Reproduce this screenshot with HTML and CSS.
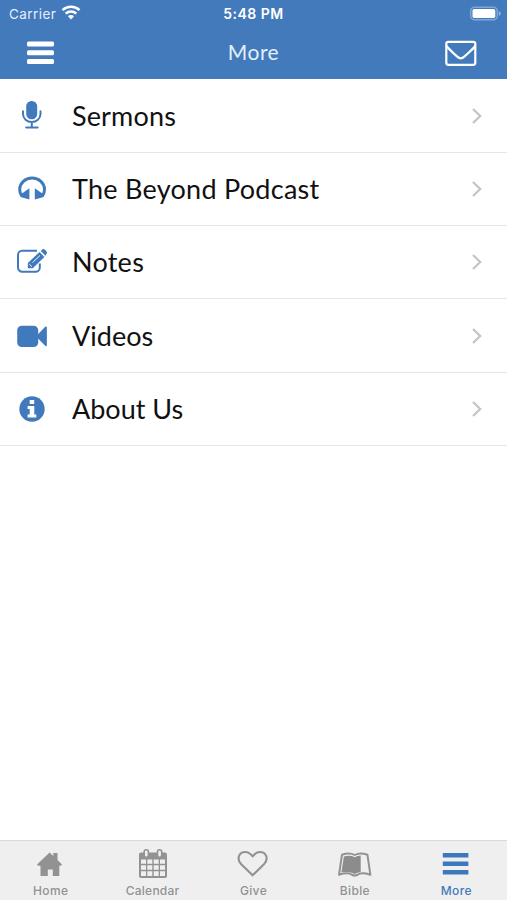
FILE: index.html
```html
<!DOCTYPE html>
<html lang="en">
<head>
<meta charset="utf-8">
<title>More</title>
<link rel="stylesheet" href="styles.css">
</head>
<body>
<div class="app">
  <header class="header">
    <div class="status">
      <div class="carrier"><span>Carrier</span>
        <svg width="20" height="15" viewBox="0 0 20 15" fill="none" stroke="#fff" stroke-width="2.5"><path d="M1.5 5.2a12.3 12.3 0 0 1 17 0M4.700 8.700a7.700 7.700 0 0 1 10.600 0"/><path d="M6.900 11.200a4.400 4.400 0 0 1 6.200 0L10 14.500z" fill="#fff" stroke="none"/></svg>
      </div>
      <div class="time">5:48 PM</div>
      <svg class="battery" width="32" height="16" viewBox="0 0 32 16"><rect x="1.700" y="1.200" width="26.600" height="12.600" rx="4" fill="none" stroke="#7ea7d9" stroke-width="1.500"/><rect x="3.500" y="3" width="22.800" height="9" rx="1.800" fill="#fff"/><path d="M29.800 5v5q2-1 2-2.500t-2-2.500z" fill="#8eb3df"/></svg>
    </div>
    <nav class="navbar">
      <svg width="28" height="24" viewBox="0 0 28 24" fill="#fff"><rect x="0" y="0.500" width="27" height="5" rx="1.500"/><rect x="0" y="9.200" width="27" height="5" rx="1.500"/><rect x="0" y="17.900" width="27" height="5" rx="1.500"/></svg>
      <h1>More</h1>
      <svg class="mail" width="32" height="26" viewBox="0 0 32 26" fill="none" stroke="#fff" stroke-width="2.200"><rect x="1.300" y="1.800" width="29" height="23" rx="2"/><path d="M1.500 6C4 9.500 8 12.500 12 16.400c3 2.600 4.600 2.600 7.600 0C23.600 12.500 27.600 9.500 30.200 6"/></svg>
    </nav>
  </header>
  <main class="list">
    <a class="row">
      <svg class="icon" viewBox="0 0 40 40"><rect x="14.200" y="4.900" width="11" height="18.300" rx="5.200" fill="#417abc"/><path d="M11 15.300v2.700a8.700 8 0 0 0 17.500 0v-2.700M19.800 26v5M14.200 31.400h11.500" fill="none" stroke="#417abc" stroke-width="2" stroke-linecap="round"/></svg>
      <span class="label sermons">Sermons</span>
      <svg class="chevron" viewBox="0 0 12 18"><path d="M2 2l7.200 7L2 16"/></svg>
    </a>
    <a class="row">
      <svg class="icon" viewBox="0 0 40 40"><path d="M9.500 26.500C7.900 24.500 7.700 22.500 7.700 20.300a12.400 11.300 0 0 1 24.800 0c0 2.200-.2 4.200-1.800 6.200" fill="none" stroke="#417abc" stroke-width="3"/><path d="M17.400 19.300v11.200L8.500 28 8.500 25.500zM22.800 19.300v11.200l8.900-2.500v-2.500z" fill="#417abc"/></svg>
      <span class="label podcast">The Beyond Podcast</span>
      <svg class="chevron" viewBox="0 0 12 18"><path d="M2 2l7.200 7L2 16"/></svg>
    </a>
    <a class="row">
      <svg class="icon" viewBox="0 0 40 40"><path d="M25 8.800H10.200a4.200 4.200 0 0 0-4.200 4.200v12.600a4.200 4.200 0 0 0 4.200 4.200h13.400a4.200 4.200 0 0 0 4.200-4.200v-4" fill="none" stroke="#417abc" stroke-width="2"/><path d="M15.800 26.200v-5.300L27.600 9.900l4.800 5.100-11.600 11.200z" fill="#417abc"/><path d="M28.800 8.900l1.700-1.600q1.100-.8 2.200.3l1.900 2q1 1.200-.1 2.300L33.400 13.800z" fill="#417abc"/><path d="M20.500 20.500l7.500-7M17.200 22l2.800 2.800" stroke="#fff" stroke-width=".9"/></svg>
      <span class="label notes">Notes</span>
      <svg class="chevron" viewBox="0 0 12 18"><path d="M2 2l7.200 7L2 16"/></svg>
    </a>
    <a class="row">
      <svg class="icon" viewBox="0 0 40 40" fill="#417abc"><rect x="5.200" y="9.700" width="21" height="21.300" rx="4.600"/><path d="M25.500 18.700l7.700-7.900q1.700-1 1.700.9v17.200q0 1.900-1.700.9l-7.700-7.900z"/></svg>
      <span class="label videos">Videos</span>
      <svg class="chevron" viewBox="0 0 12 18"><path d="M2 2l7.200 7L2 16"/></svg>
    </a>
    <a class="row">
      <svg class="icon" viewBox="0 0 40 40"><circle cx="20" cy="20" r="12.700" fill="#417abc"/><path d="M17.700 11h4.500v4h-4.500zM15.600 17h6.700v8.600h2v3h-8.700v-3h2.100V20h-2.100z" fill="#fff"/></svg>
      <span class="label about">About Us</span>
      <svg class="chevron" viewBox="0 0 12 18"><path d="M2 2l7.200 7L2 16"/></svg>
    </a>
  </main>
  <footer class="tabs">
    <a class="tab">
      <svg viewBox="0 0 36 36"><path d="M4 18.500L16.600 6.500l3.700 3.500V7h4.200v7l4.500 4.500-1.200 1.300h-1.500V30h-6.500v-6.500h-5V30H7.500V19.800H5.100z" fill="#929292"/></svg>
      <span>Home</span>
    </a>
    <a class="tab">
      <svg viewBox="0 0 36 36"><path d="M7 6.500h24q2 0 2 2V30q0 2-2 2H7q-2 0-2-2V8.500q0-2 2-2z" fill="#929292"/><path d="M7 13.500h5v4.300H7zm6.300 0h5v4.300h-5zm6.400 0h5v4.300h-5zm6.300 0h5v4.300h-5zM7 19.300h5v4.500H7zm6.300 0h5v4.500h-5zm6.400 0h5v4.500h-5zm6.300 0h5v4.500h-5zM7 25.300h5V30H7zm6.300 0h5V30h-5zm6.400 0h5V30h-5zm6.300 0h5V30h-5z" fill="#efefef"/><rect x="10.200" y="3.800" width="4.200" height="7.400" rx="2" fill="#efefef" stroke="#929292" stroke-width="1.600"/><rect x="23.500" y="3.800" width="4.200" height="7.400" rx="2" fill="#efefef" stroke="#929292" stroke-width="1.600"/></svg>
      <span class="nudge">Calendar</span>
    </a>
    <a class="tab">
      <svg viewBox="0 0 36 36"><path d="M17.600 29.300L6 17.900C1 12.200 4.500 6 10.200 6c3.400 0 5.800 2.200 7.400 4.400 1.600-2.200 4-4.400 7.400-4.400 5.700 0 9.200 6.200 4.200 11.900z" fill="none" stroke="#929292" stroke-width="2.100" stroke-linejoin="round"/></svg>
      <span>Give</span>
    </a>
    <a class="tab">
      <svg viewBox="0 0 36 36"><path d="M5 8.700q7.500-2.600 12.700.3 5.200-2.900 12.700-.3l3 20.100q-9.500-3-13.200.2-2.500 1.200-5 0-3.700-3.200-13.200-.2z" fill="#efefef" stroke="#929292" stroke-width="2" stroke-linejoin="round"/><path d="M6.900 10.400q6.300-1.600 10.800.8 2.300-1.400 6-1.700v16.500q-3.500.3-6 2-4.500-2.800-13.300-1.700z" fill="#8c8c8c"/></svg>
      <span>Bible</span>
    </a>
    <a class="tab active">
      <svg viewBox="0 0 36 36" fill="#3d78bc"><rect x="4.800" y="7" width="25.600" height="4.500" rx=".6"/><rect x="4.800" y="15.500" width="25.600" height="4.500" rx=".6"/><rect x="4.800" y="24" width="25.600" height="4.500" rx=".6"/></svg>
      <span>More</span>
    </a>
  </footer>
</div>
</body>
</html>
```
FILE: styles.css
```css
* { box-sizing: border-box; }
body { margin: 0; background: #fff; font-family: Lato, sans-serif; }
svg { display: block; flex: none; }
.app { height: 900px; display: flex; flex-direction: column; }
.header { height: 79px; background: #437abb; color: #fff; }
.status {
  height: 27px;
  display: grid;
  grid-template-columns: 1fr auto 1fr;
  align-items: center;
  padding: 0 6px 0 9px;
  font-family: Inter, sans-serif;
  font-size: 13.500px;
}
.carrier { display: flex; align-items: center; gap: 5px; color: #e4effb; letter-spacing: .45px; }
.carrier svg { margin-top: -2px; }
.time { margin-right: 3px; font-weight: 600; font-size: 14px; letter-spacing: .5px; }
.battery { justify-self: end; }
.navbar {
  height: 52px;
  display: grid;
  grid-template-columns: 1fr auto 1fr;
  align-items: center;
  padding: 0 30px 0 27px;
}
.navbar h1 { margin: 0 0 4px 3px; font-size: 21px; font-weight: 400; letter-spacing: .5px; color: #e3effc; }
.mail { justify-self: end; }
.list { flex: 1; padding-top: .5px; }
.row {
  height: 73.300px;
  display: flex;
  align-items: center;
  padding: 0 24px 0 12px;
  border-bottom: 1px solid #e6e6e6;
}
.icon { width: 40px; height: 40px; margin-right: 20px; }
.label { flex: 1; font-size: 27px; line-height: 40px; color: #111; white-space: nowrap; }
.sermons { letter-spacing: .15px; }
.podcast { letter-spacing: .27px; }
.notes { letter-spacing: .25px; }
.chevron { width: 12px; height: 18px; fill: none; stroke: #c4c4c4; stroke-width: 2.200; }
.tabs {
  height: 60px;
  display: grid;
  grid-template-columns: repeat(5, 1fr);
  background: #efefef;
  border-top: 1px solid #d9d9d9;
}
.tab {
  display: flex;
  flex-direction: column;
  align-items: center;
  padding-top: 5px;
  color: #929292;
  font: 500 12px/18px Inter, sans-serif;
  letter-spacing: .35px;
}
.tab svg { width: 36px; height: 36px; }
.nudge { padding-left: 1px; letter-spacing: .25px; }
.tab.active { color: #437abb; }
```
